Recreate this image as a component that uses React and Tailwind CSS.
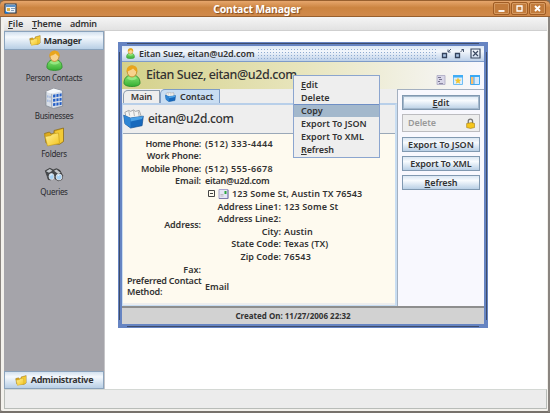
import React from "react";

const SANS = "font-['Noto_Sans','Liberation_Sans',sans-serif]";

function Person({ className }) {
  return (
    <svg viewBox="0 0 18 22" className={className}>
      <path d="M1 18c0-5 3-8 8-8s8 3 8 8c0 2-3 3.500-8 3.500S1 20 1 18z" fill="url(#green)" stroke="#2d8f2b" strokeWidth=".9" />
      <path d="M4 13c2-2 8-2 10 0-2 3-8 3-10 0z" fill="#a5ee8e" opacity=".7" />
      <ellipse cx="9" cy="6.500" rx="4.800" ry="5.500" fill="#f8d28c" stroke="#b9821d" strokeWidth=".8" />
      <path d="M3.800 7C3 1.500 7 .4 9.500.6c4 .2 5.500 3 4.600 6.400C12.500 6 11 4.500 10 3.500 8.500 5.500 6 5 3.800 7z" fill="#e9a51c" />
    </svg>
  );
}

function Folder({ className }) {
  return (
    <svg viewBox="0 0 22 20" className={className}>
      <path d="M3 16L1.500 6.500l5-1.500 1.500 2 3-.8V3.500L20.500 1v13.500l-4 2.800z" fill="#e0ab1c" stroke="#8d7020" strokeWidth=".8" />
      <path d="M12 4.500l8-2.500v12l-4 3z" fill="#f2ca36" />
      <path d="M1.500 7l3 12 12-2.500-1-10.500-6 1-1.500 1.500-5.500 1z" fill="url(#gold)" stroke="#c39a18" strokeWidth=".6" />
    </svg>
  );
}

function Building({ className }) {
  return (
    <svg viewBox="0 0 20 22" className={className}>
      <path d="M1 4l8-3.500L18.500 3v16L9 21.500 1 18.500z" fill="#d9dfe8" stroke="#777e89" strokeWidth=".7" />
      <path d="M1 4l8-3.500L18.500 3 7 6z" fill="#f7f9fb" />
      <path d="M7 6v15" stroke="#98a2b1" strokeWidth=".8" />
      <g fill="#235ec6">
        <path d="M8.500 7l2.500-.4v3l-2.500.4zM12 6.500l2.300-.4v3l-2.300.4zM15.300 6l2.200-.4v3l-2.200.4zM8.500 11.500l2.500-.3v3l-2.500.3zM12 11l2.300-.3v3l-2.300.3zM15.300 10.500l2.200-.3v3l-2.200.3zM8.500 16l2.500-.3v3l-2.500.3zM12 15.500l2.300-.3v3l-2.300.3zM15.300 15l2.200-.3v3l-2.200.3z" />
        <path d="M2.200 7.500l1.500.3v2.500l-1.500-.3zM4.600 8l1.400.3v2.500l-1.400-.3zM2.200 12l1.500.3v2.500l-1.500-.3zM4.600 12.500l1.400.3v2.500l-1.400-.3z" opacity=".3" />
      </g>
    </svg>
  );
}

function Binoculars({ className }) {
  return (
    <svg viewBox="0 0 24 18" className={className}>
      <path d="M1.500 4.500L7 1.500l4 2 4-1.500 4 2 3.500 6.500-1 4.500-4 1.500-4-2-1-3-2 .5-2 3.500-3.500-.5-1-3.500z" fill="#45484c" stroke="#333" strokeWidth=".8" />
      <path d="M2.500 5L7 2.500l3 2-4 2.500zM12 4.500l3-1.500 5 4-3 1.500z" fill="#c4c8cc" />
      <ellipse cx="9" cy="11.500" rx="2.900" ry="3.600" fill="#a8d2f5" stroke="#e4e7ea" />
      <ellipse cx="18" cy="12" rx="3.500" ry="3.600" fill="#a8d2f5" stroke="#e4e7ea" />
      <path d="M7.500 10l2-1M16.500 10.500l2-1" stroke="#fff" />
    </svg>
  );
}

function CardBox({ className }) {
  return (
    <svg viewBox="0 0 22 20" className={className}>
      <path d="M2 3l4-2 2 1 3-1.500L13 2l4-1 2 6-2 4H4z" fill="#f4f4f2" stroke="#8d9094" strokeWidth=".8" />
      <path d="M6 1.500l1 5M11 1l1 6M16 2l1 5" stroke="#999" strokeWidth=".7" />
      <path d="M.7 6l7 3 13.600-2-1.300 10L8 19.500 2 15z" fill="#1769bd" stroke="#124f91" strokeWidth=".7" />
      <path d="M7.500 9l13.500-2-1 3-12 2.500z" fill="#4ca2e7" />
      <path d="M1 6l6.700 3 .3 10-6-4z" fill="#2f86d5" />
    </svg>
  );
}

function Lock() {
  return (
    <svg viewBox="0 0 10 12" className="h-[11px] w-[9px]">
      <path d="M2.500 6V3.500a2.300 2.300 0 014.800 0V6" fill="none" stroke="#777" strokeWidth="1.400" />
      <path d="M.7 6L6 5l3.500 1v4.500L5 11.500.7 10.500z" fill="#f6c61d" stroke="#9b7308" strokeWidth=".6" />
    </svg>
  );
}

function Defs() {
  return (
    <svg className="absolute h-0 w-0">
      <defs>
        <linearGradient id="green" x2="0" y2="1">
          <stop stopColor="#8be676" />
          <stop offset="1" stopColor="#35ae32" />
        </linearGradient>
        <linearGradient id="gold" x2="1" y2="1">
          <stop stopColor="#fff3a0" />
          <stop offset="1" stopColor="#f4c41c" />
        </linearGradient>
      </defs>
    </svg>
  );
}

function Mnemonic({ text }) {
  return (
    <>
      <span className="underline decoration-1 underline-offset-1">{text[0]}</span>
      {text.slice(1)}
    </>
  );
}

function WindowButton({ kind }) {
  return (
    <div className="flex h-[13px] w-[17px] items-center justify-center rounded-[2px] border border-[#a05d25] bg-[#c27b3b] shadow-[inset_0_0_0_1px_#d69a61]">
      <svg viewBox="0 0 9 9" className="h-[9px] w-[9px]" fill="none" stroke="#fff">
        {kind === "min" && <path d="M1.500 7h6" strokeWidth="1.800" />}
        {kind === "max" && <path d="M2 2h5v5H2z" strokeWidth="1.300" />}
        {kind === "close" && <path d="M2 2l5 5M7 2L2 7" strokeWidth="1.900" />}
      </svg>
    </div>
  );
}

function SideItem({ icon, label }) {
  return (
    <div className="flex h-[38px] flex-col items-center">
      <div className="flex h-[22px] items-center justify-center pb-[1px]">{icon}</div>
      <span className="text-[8px] leading-[12px] font-normal tracking-[-0.3px] text-[#2a2a2e]">{label}</span>
    </div>
  );
}

function InnerButton({ children, className = "" }) {
  return (
    <div className={`flex h-[15px] items-center justify-center border border-[#8199b1] bg-linear-to-b from-[#dbe7f3] via-[#f8fbfe] via-35% to-[#b9cfe5] leading-[13px] ${className}`}>
      {children}
    </div>
  );
}

function Row({ label, value, labelWidth = "w-[78px]", gap = "gap-[4px]", labelClass = "", valueClass = "" }) {
  return (
    <div className={`flex h-[12.5px] items-center ${gap}`}>
      <span className={`${labelWidth} shrink-0 text-right ${labelClass}`}>{label}</span>
      <span className={valueClass}>{value}</span>
    </div>
  );
}

function FrameTitle() {
  return (
    <div className="flex h-[16px] shrink-0 items-center border-b border-[#7e9bc8] bg-linear-to-b from-[#dce8f5] via-[#f3f7fc] via-35% to-[#bdd0e8] pr-[3px] pl-[4px]">
      <Person className="h-[11px] w-[9px]" />
      <span className="ml-[4px] w-[118px] text-[9px] tracking-[-0.1px]">Eitan Suez, eitan@u2d.com</span>
      <div className="h-[11px] w-[180px] bg-[radial-gradient(#8fabd0_0.7px,transparent_1px)] bg-[size:3px_3px]" />
      <div className="ml-auto flex items-center gap-[2px]">
        <svg viewBox="0 0 11 11" className="h-[11px] w-[11px]" fill="none" stroke="#35445e">
          <path d="M1.500 5.500h4v4h-4z" strokeWidth="1.300" fill="#abc5e5" />
          <path d="M10 1L7.500 3.500M7 1.500V4h2.500" strokeWidth=".9" />
        </svg>
        <svg viewBox="0 0 11 11" className="h-[11px] w-[11px]" fill="none" stroke="#35445e">
          <path d="M1.500 5.500h4v4h-4z" strokeWidth="1.300" fill="#abc5e5" />
          <path d="M6.500 4l3-3M7.500 1.500h2V4" strokeWidth=".9" />
        </svg>
        <svg viewBox="0 0 11 11" className="ml-[3px] h-[11px] w-[11px]" fill="none" stroke="#3b4961">
          <path d="M1 1h9v9H1z" strokeWidth="1.200" />
          <path d="M3 3l5 5M8 3L3 8" strokeWidth="1.200" />
        </svg>
      </div>
    </div>
  );
}

function ViewIcons() {
  return (
    <div className="flex items-center gap-[7px]">
      <svg viewBox="0 0 10 10" className="h-[10px] w-[10px]">
        <path d="M1 .5h8v9H1z" fill="#d9d7e8" stroke="#aba8c3" strokeWidth=".8" />
        <path d="M2 2h3v1H2zM3 4h3v1H3zM2 6h2v1H2zM3 8h4v.8H3z" fill="#77738f" />
      </svg>
      <svg viewBox="0 0 10 10" className="h-[10px] w-[10px]">
        <path d="M.5.5h9v9h-9z" fill="#dceefd" stroke="#6fbdf4" />
        <path d="M0 0h10v2.500H0z" fill="#40adf5" />
        <path d="M5 2.500l1 2 2.500.2-2 1.600.7 2.500L5 7.500 2.800 8.800l.7-2.500-2-1.600L4 4.500z" fill="#f3c52e" />
      </svg>
      <svg viewBox="0 0 10 10" className="h-[10px] w-[10px]">
        <path d="M.5.500h9v9h-9z" fill="#d9eafb" stroke="#44aaf0" />
        <path d="M0 0h10v2H0z" fill="#3ba9f4" />
        <path d="M1 2h2.500v7H1z" fill="#ffbd6b" />
        <path d="M4 2v7.500" stroke="#3fa6ef" />
      </svg>
    </div>
  );
}

function ContactDetails() {
  const nested = { labelWidth: "w-[76px]", gap: "gap-[3px]", valueClass: "tracking-[0.1px]" };
  return (
    <div className="flex h-[170px] flex-col border-t border-[#9aa8b8] bg-[#fefaef] pt-[3px]">
      <Row label="Home Phone:" value="(512) 333-4444" labelClass="tracking-[-0.3px]" valueClass="tracking-[0.4px]" />
      <Row label="Work Phone:" value="" labelClass="tracking-[-0.15px]" />
      <Row label="Mobile Phone:" value="(512) 555-6678" labelClass="tracking-[-0.2px]" valueClass="tracking-[0.4px]" />
      <Row label="Email:" value="eitan@u2d.com" labelClass="tracking-[-0.1px]" valueClass="tracking-[-0.3px]" />
      <div className="flex h-[76px] items-center gap-[4px]">
        <span className="w-[78px] shrink-0 text-right tracking-[-0.1px]">Address:</span>
        <div className="flex flex-col">
          <div className="flex h-[13px] items-center pl-[3px]">
            <svg viewBox="0 0 7 7" className="h-[7px] w-[7px]" fill="none" stroke="#444">
              <path d="M.5.5h6v6h-6zM2 3.500h3" />
            </svg>
            <svg viewBox="0 0 10 10" className="ml-[3px] h-[10px] w-[11px]">
              <path d="M.5.500h9v9h-9z" fill="#e6e5f5" stroke="#a7a5cc" />
              <path d="M.500 9.500h9V1" fill="none" stroke="#7d7bab" />
              <path d="M2 5.500h3M2 7h3" stroke="#aaa" strokeWidth=".7" />
              <path d="M6 2h2v3H6z" fill="#2aa63c" />
            </svg>
            <span className="ml-[3px] tracking-[0.1px]">123 Some St, Austin TX 76543</span>
          </div>
          <Row label="Address Line1:" value="123 Some St" {...nested} />
          <Row label="Address Line2:" value="" {...nested} />
          <Row label="City:" value="Austin" {...nested} />
          <Row label="State Code:" value="Texas (TX)" {...nested} />
          <Row label="Zip Code:" value="76543" {...nested} valueClass="tracking-[0.3px]" />
        </div>
      </div>
      <Row label="Fax:" value="" />
      <div className="flex h-[22px] items-center gap-[4px]">
        <span className="w-[78px] shrink-0 pl-[4px] leading-[10.5px] tracking-[-0.22px]">
          Preferred Contact
          <br />
          Method:
        </span>
        <span>Email</span>
      </div>
    </div>
  );
}

function ContextMenu() {
  return (
    <div className="absolute top-[75px] left-[293px] h-[83px] w-[87px] border border-[#8ba5cf] bg-[#eeeeee] pt-[2px] text-[9px]">
      {["Edit", "Delete", "Copy", "Export To JSON", "Export To XML", "Refresh"].map((item) => (
        <div
          key={item}
          className={`h-[13px] pl-[7px] ${item === "Copy" ? "border-t border-[#6f8fc5] bg-[#a3b8cc] leading-[12px]" : "leading-[13px]"} ${item.startsWith("Export") ? "tracking-[0.02px]" : item === "Refresh" ? "tracking-[-0.1px]" : "tracking-[0px]"}`}
        >
          {item === "Edit" || item === "Refresh" ? <Mnemonic text={item} /> : item}
        </div>
      ))}
    </div>
  );
}

function FrameEdges() {
  return (
    <>
      <div className="absolute top-[-3px] right-[5px] left-[5px] h-px bg-[#3f4d6b]" />
      <div className="absolute right-[5px] bottom-[-3px] left-[5px] h-px bg-[#3f4d6b]" />
      <div className="absolute top-[6px] bottom-[4px] left-[-3px] w-px bg-[#3f4d6b]" />
      <div className="absolute top-[6px] right-[-3px] bottom-[4px] w-px bg-[#3f4d6b]" />
    </>
  );
}

export default function App() {
  return (
    <div className={`relative flex h-[413px] w-[550px] flex-col overflow-hidden bg-[#77726c] text-[9px] font-semibold whitespace-nowrap text-[#333] ${SANS}`}>
      <Defs />
      <div className="flex h-[17px] shrink-0 items-center rounded-t-[5px] border-t border-b border-t-[#98602f] border-b-[#98602f] bg-linear-to-b from-[#e6a66c] via-[#cc8440] via-45% to-[#d08a4c] px-[4px]">
        <svg viewBox="0 0 13 12" className="h-[12px] w-[13px]">
          <path d="M1 1h11v9H1z" fill="#edf2f7" stroke="#263c55" strokeWidth="1.200" />
          <path d="M2 2h10v2H2z" fill="#5a91c9" />
          <path d="M3 5h3v3H3z" fill="#ddb347" />
          <path d="M7 5.500h4M7 7.500h3" stroke="#68a" strokeWidth=".8" />
          <path d="M1 8l5 2.500H1z" fill="#1679d7" />
        </svg>
        <span className="flex-1 pl-[4px] text-center text-[10.5px] leading-[14px] font-bold tracking-[-0.2px] text-white [text-shadow:1px_1px_1px_#7c4a20]">Contact Manager</span>
        <div className="flex">
          <WindowButton kind="min" />
          <div className="w-px" />
          <WindowButton kind="max" />
          <div className="w-px" />
          <WindowButton kind="close" />
        </div>
      </div>

      <div className="flex min-h-0 flex-1 flex-col rounded-b-[3px] border-r-2 border-b-2 border-l border-r-[#8a8580] border-b-[#77726c] border-l-[#8a8580] bg-[#f3f1ec] pr-[1px] pb-[2px] pl-[3px]">
        <div className="flex h-[14px] shrink-0 items-center border-b border-[#cfcfcf] bg-linear-to-b from-[#f5f5f5] to-[#e2e2e2] pl-[4px]">
          <span className="w-[24px]"><Mnemonic text="File" /></span>
          <span className="w-[38px] tracking-[-0.15px]"><Mnemonic text="Theme" /></span>
          <span className="tracking-[-0.2px]">admin</span>
        </div>

        <div className="flex min-h-0 flex-1 bg-white">
          <div className="flex w-[101px] shrink-0 flex-col border-r border-[#c5c5c8] bg-[#a5a4aa]">
            <div className="flex h-[19px] shrink-0 items-center justify-center gap-[3px] border border-[#8ba3bc] bg-linear-to-b from-[#d3e1ef] via-[#f5f9fd] via-30% to-[#b8cfe5] pl-[2px] text-[9px] font-bold">
              <Folder className="h-[11px] w-[12px]" />
              <span className="tracking-[-0.35px]">Manager</span>
            </div>
            <div className="flex flex-1 flex-col">
              <SideItem icon={<Person className="h-[21px] w-[17px]" />} label="Person Contacts" />
              <SideItem icon={<Building className="h-[21px] w-[19px]" />} label="Businesses" />
              <SideItem icon={<Folder className="h-[20px] w-[22px]" />} label="Folders" />
              <SideItem icon={<Binoculars className="h-[15px] w-[22px]" />} label="Queries" />
            </div>
            <div className="flex h-[18px] shrink-0 items-center justify-center gap-[4px] border border-[#8ba3bc] bg-linear-to-b from-[#d3e1ef] via-[#f5f9fd] via-30% to-[#b8cfe5] text-[9px] font-bold">
              <Folder className="h-[11px] w-[12px]" />
              <span className="tracking-[-0.3px]">Administrative</span>
            </div>
          </div>

          <div className="flex-1 pt-[11px] pl-[13px]">
            <div className="relative flex h-[286px] w-[370px] flex-col border-[4px] border-[#6684c2] bg-[#eeeeee]">
              <FrameEdges />
              <FrameTitle />
              <div className="flex h-[27px] shrink-0 items-center bg-linear-to-r from-[#d4d18a] via-[#e8e5bd] via-50% to-[#f8f8fe] pr-[4px]">
                <Person className="h-[22px] w-[20px]" />
                <span className="ml-[4px] text-[12.5px] font-medium tracking-[-0.42px]">Eitan Suez, eitan@u2d.com</span>
                <div className="mt-[8px] ml-auto"><ViewIcons /></div>
              </div>
              <div className="flex min-h-0 flex-1">
                <div className="flex w-[275px] flex-col">
                  <div className="flex h-[14px] items-end pl-[1px]">
                    <div className="flex h-[13px] w-[37px] items-center justify-center rounded-tl-[5px] border border-b-0 border-[#8a9aac] bg-[#eeeeee] text-[9px] tracking-[-0.15px]">Main</div>
                    <div className="flex h-[14px] w-[60px] items-center gap-[4px] rounded-tl-[5px] border border-b-0 border-[#7d9cc5] bg-[#c8ddf2] pl-[4px]">
                      <CardBox className="h-[10px] w-[11px]" />
                      <span className="tracking-[-0.1px]">Contact</span>
                    </div>
                  </div>
                  <div className="flex flex-1 flex-col border border-t-2 border-r-2 border-[#c8ddf2] border-t-[#b8cfe9]">
                    <div className="flex h-[28px] items-center bg-[#eeeeee]">
                      <CardBox className="h-[20px] w-[21px]" />
                      <span className="ml-[4px] text-[12px] font-medium tracking-[-0.3px]">eitan@u2d.com</span>
                    </div>
                    <ContactDetails />
                  </div>
                </div>
                <div className="flex flex-1 flex-col border-t border-l border-[#a4b0c0] bg-[#f8f8fe] pt-[5px] pr-[4px] pl-[4px]">
                  <InnerButton className="shadow-[inset_0_0_0_1px_#a4b8cc]"><Mnemonic text="Edit" /></InnerButton>
                  <div className="mt-[4px] flex h-[18px] items-center justify-between border border-[#bcbcc0] bg-[#eeeeee] pr-[4px] pl-[5px] tracking-[-0.1px] text-[#999]">
                    <span>Delete</span>
                    <Lock />
                  </div>
                  <InnerButton className="mt-[5px] tracking-[0.02px]">Export To JSON</InnerButton>
                  <InnerButton className="mt-[4px] tracking-[-0.1px]">Export To XML</InnerButton>
                  <InnerButton className="mt-[4px] tracking-[-0.1px]"><Mnemonic text="Refresh" /></InnerButton>
                </div>
              </div>
              <div className="flex h-[18px] shrink-0 items-center justify-center border-t-2 border-[#8e8e8e] bg-[#d2d2d2] pr-[20px] text-[8px] font-bold">Created On: 11/27/2006 22:32</div>
            </div>
          </div>
        </div>
        <div className="h-[20px] shrink-0 border border-[#b8bcb8] border-t-[#d4d8d4] bg-[#ececec]" />
      </div>
      <ContextMenu />
    </div>
  );
}
